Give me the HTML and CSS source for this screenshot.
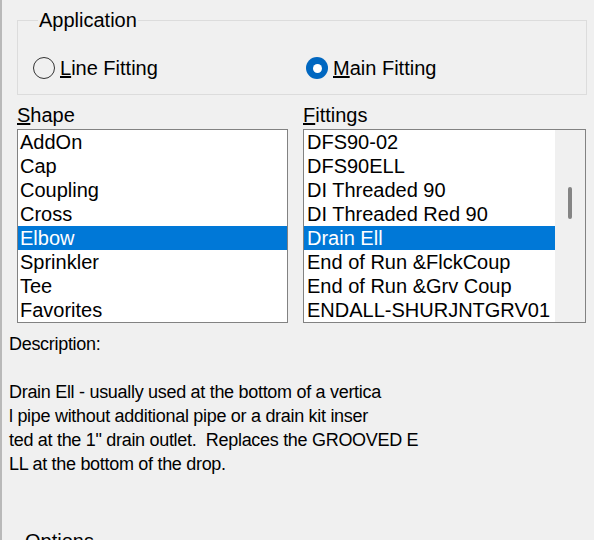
FILE: index.html
```html
<!DOCTYPE html>
<html lang="en">
  <head>
    <meta charset="UTF-8" />
    <title>Fitting</title>
    <link rel="stylesheet" href="styles.css">
  </head>
  <body>
    <!-- 对话框 -->
    <div class="dialog">
      <!-- Application 分组 -->
      <fieldset class="group app">
        <legend>Application</legend>
        <div class="radios">
          <label class="opt">
            <span class="radio"></span>
            <span><u>L</u>ine Fitting</span>
          </label>
          <label class="opt">
            <span class="radio checked"></span>
            <span><u>M</u>ain Fitting</span>
          </label>
        </div>
      </fieldset>

      <!-- 两个列表 -->
      <div class="lists">
        <div class="col shape">
          <div class="cap"><u>S</u>hape</div>
          <div class="listbox">
            <ul class="items">
              <li>AddOn</li>
              <li>Cap</li>
              <li>Coupling</li>
              <li>Cross</li>
              <li class="sel">Elbow</li>
              <li>Sprinkler</li>
              <li>Tee</li>
              <li>Favorites</li>
            </ul>
          </div>
        </div>
        <div class="col fittings">
          <div class="cap"><u>F</u>ittings</div>
          <div class="listbox">
            <ul class="items">
              <li>DFS90-02</li>
              <li>DFS90ELL</li>
              <li>DI Threaded 90</li>
              <li>DI Threaded Red 90</li>
              <li class="sel">Drain Ell</li>
              <li>End of Run &amp;FlckCoup</li>
              <li>End of Run &amp;Grv Coup</li>
              <li>ENDALL-SHURJNTGRV01</li>
            </ul>
            <div class="track">
              <div class="thumb"></div>
            </div>
          </div>
        </div>
      </div>

      <!-- 描述 -->
      <div class="desc">
        <div>Description:</div>
        <div>&nbsp;</div>
        <div>Drain Ell - usually used at the bottom of a vertica</div>
        <div>l pipe without additional pipe or a drain kit inser</div>
        <div>ted at the 1" drain outlet.&nbsp; Replaces the GROOVED E</div>
        <div>LL at the bottom of the drop.</div>
      </div>

      <!-- Options 分组 (被截断) -->
      <fieldset class="group options">
        <legend>Options</legend>
      </fieldset>
    </div>
  </body>
</html>
```

FILE: styles.css
```css
* {
  margin: 0;
  padding: 0;
  box-sizing: border-box;
}

body {
  width: 594px;
  height: 540px;
  overflow: hidden;
  background-color: #f0f0f0;
  font-family: "Liberation Sans", Arial, sans-serif;
  font-size: 20px;
  line-height: 24px;
  color: #000;
}

/* 对话框左侧的边线 */
.dialog {
  height: 540px;
  overflow: hidden;
  border-left: 2px solid #b9b9b9;
}

/* 分组框 */
.group {
  margin-left: 15px;
  width: 570px;
  border: 1px solid #dcdcdc;
}

.group legend {
  margin-left: 5px;
  padding: 0 1px;
}

.app {
  margin-top: 8px;
  padding: 24px 0 14px 15px;
}

.radios {
  display: flex;
}

.opt {
  display: flex;
  align-items: center;
  gap: 5px;
  width: 273px;
}

/* 单选按钮 */
.radio {
  width: 22px;
  height: 22px;
  border: 1px solid #333;
  border-radius: 50%;
  display: flex;
  align-items: center;
  justify-content: center;
}

.radio.checked {
  border: none;
  background-color: #0067c0;
}

.radio.checked::after {
  content: "";
  width: 9px;
  height: 9px;
  border-radius: 50%;
  background-color: #fff;
}

/* 列表 */
.lists {
  display: flex;
  gap: 15px;
  margin: 8px 0 0 15px;
}

.shape {
  width: 271px;
}

.fittings {
  width: 283px;
}

.cap {
  margin-bottom: 2px;
}

.listbox {
  display: flex;
  height: 194px;
  border: 1px solid #828282;
  background-color: #fff;
}

.items {
  flex: 1;
  list-style: none;
  overflow: hidden;
}

.items li {
  padding-left: 2px;
  white-space: nowrap;
}

.items li.sel {
  background-color: #0078d7;
  color: #fff;
}

.fittings .items li {
  padding-left: 3px;
}

/* 滚动条 */
.track {
  width: 30px;
  display: flex;
  justify-content: center;
  padding-top: 57px;
  background-color: #f0f0f0;
}

.thumb {
  width: 4px;
  height: 32px;
  border-radius: 2px;
  background-color: #858585;
}

/* 描述 文字比列表小一号 */
.desc {
  margin: 9px 0 0 7px;
  font-size: 18px;
  letter-spacing: -0.3px;
  white-space: nowrap;
}

.options {
  margin-top: 53px;
  height: 100px;
}

.options legend {
  margin-left: 6px;
}
```
